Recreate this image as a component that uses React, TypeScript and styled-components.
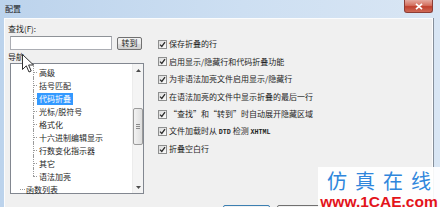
import styled, { createGlobalStyle } from 'styled-components'

const GlobalStyle = createGlobalStyle`
	html, body {
		margin: 0;
		padding: 0;
	}
	body {
		width: 440px;
		height: 207px;
		overflow: hidden;
		font-family: "Noto Sans CJK SC", "Noto Sans", sans-serif;
		font-size: 8px;
		color: #1e1e1e;
	}
`

const Window = styled.div`
	position: relative;
	width: 440px;
	height: 207px;
	overflow: hidden;
	display: flex;
	flex-direction: column;
	background: linear-gradient(90deg, #bcd3ec 0%, #cddff2 55%, #d9e6f4 100%);
`

const TitleBar = styled.div`
	height: 18px;
	flex-shrink: 0;
	display: flex;
	align-items: center;
	padding: 0 7px 0 5px;
`

const Title = styled.span`
	line-height: 10px;
	color: #1b1b1b;
`

const CloseButton = styled.div`
	align-self: flex-start;
	margin-left: auto;
	width: 29px;
	height: 13px;
	box-sizing: border-box;
	border: 1px solid #8c3d35;
	border-top: 0;
	border-radius: 0 0 3px 3px;
	background: linear-gradient(#e5a99f 0%, #d4705f 45%, #c0402e 55%, #cf6a57 100%);
	display: flex;
	align-items: center;
	justify-content: center;
`

const Client = styled.div`
	flex: 1;
	margin: 0 7px 0 4px;
	background: #f0f0f0;
	border-top: 1px solid #fbfcfd;
	border-left: 1px solid #fbfcfd;
	border-right: 1px solid #fdfdfd;
	box-shadow: 1px 0 0 #858f9b;
	display: flex;
	flex-direction: column;
`

const Body = styled.div`
	display: grid;
	grid-template-columns: 136px 1fr;
	column-gap: 14px;
	padding: 5px 0 0 3px;
`

const LeftColumn = styled.div`
	display: flex;
	flex-direction: column;
`

const FieldLabel = styled.label<{ $gap?: number }>`
	height: 10px;
	line-height: 10px;
	margin-top: ${({ $gap }) => $gap ?? 0}px;
`

const SearchRow = styled.div`
	display: flex;
	align-items: center;
	gap: 5px;
	margin: 2px 0 0 2px;
	height: 14px;
`

const SearchInput = styled.div`
	width: 102px;
	height: 14px;
	box-sizing: border-box;
	border: 1px solid #abadb3;
	border-top-color: #8e9297;
	background: #fff;
`

const PushButton = styled.div<{ $width?: number; $focused?: boolean }>`
	width: ${({ $width }) => $width ?? 25}px;
	height: 13px;
	box-sizing: border-box;
	border: 1px solid ${({ $focused }) => ($focused ? '#3c7fb1' : '#707070')};
	border-radius: 2px;
	background: linear-gradient(#f2f2f2 0%, #ebebeb 50%, #dddddd 51%, #cfcfcf 100%);
	display: flex;
	align-items: center;
	justify-content: center;
	line-height: 10px;
	flex-shrink: 0;
`

const Tree = styled.div`
	margin: 1px 0 0 2px;
	width: 134px;
	height: 131px;
	box-sizing: border-box;
	border: 1px solid #828790;
	background: #fff;
	display: flex;
`

const TreeList = styled.ul`
	flex: 1;
	list-style: none;
	margin: 0;
	padding: 2px 0 0;
`

const TreeItem = styled.li<{ $level: number; $last?: boolean }>`
	position: relative;
	height: 13px;
	display: flex;
	align-items: center;
	padding-left: ${({ $level }) => ($level === 2 ? 26 : 13)}px;

	&::before {
		content: '';
		position: absolute;
		left: ${({ $level }) => ($level === 2 ? 22 : 9)}px;
		top: ${({ $level }) => ($level === 2 ? -2 : 6)}px;
		height: ${({ $level, $last }) => ($level === 1 ? 0 : $last ? 8 : 15)}px;
		border-left: 1px dotted #9a9a9a;
	}

	&::after {
		content: '';
		position: absolute;
		left: ${({ $level }) => ($level === 2 ? 22 : 9)}px;
		top: 6px;
		width: ${({ $level }) => ($level === 2 ? 4 : 5)}px;
		border-top: 1px dotted #9a9a9a;
	}
`

const TreeLabel = styled.span<{ $selected?: boolean }>`
	padding: 0 2px;
	height: 12px;
	line-height: 12px;
	background: ${({ $selected }) => ($selected ? '#3399ff' : 'transparent')};
	color: ${({ $selected }) => ($selected ? '#fff' : '#1e1e1e')};
	white-space: nowrap;
`

const ScrollBar = styled.div`
	width: 10px;
	background: #f4f4f4;
	border-left: 1px solid #ececec;
	display: flex;
	flex-direction: column;
`

const ScrollArrow = styled.div`
	height: 12px;
	display: flex;
	align-items: center;
	justify-content: center;
`

const ScrollTrack = styled.div`
	flex: 1;
	display: flex;
	flex-direction: column;
`

const ScrollThumb = styled.div`
	margin: 32px 0 0 0;
	height: 37px;
	box-sizing: border-box;
	border: 1px solid #9b9b9b;
	border-radius: 2px;
	background: linear-gradient(90deg, #f2f2f2, #dedede);
	display: flex;
	flex-direction: column;
	align-items: center;
	justify-content: center;
	gap: 1px;
`

const Grip = styled.span`
	width: 4px;
	height: 1px;
	background: #8a8a8a;
`

const Options = styled.div`
	display: flex;
	flex-direction: column;
	gap: 7.5px;
	padding-top: 15px;
`

const OptionRow = styled.label`
	display: flex;
	align-items: center;
	gap: 2px;
	height: 10px;
	line-height: 10px;
	white-space: nowrap;
`

const CheckBox = styled.span`
	width: 9px;
	height: 9px;
	box-sizing: border-box;
	border: 1px solid #8e8f8f;
	background: linear-gradient(135deg, #dcdcdc, #fbfbfb);
	display: flex;
	align-items: center;
	justify-content: center;
	flex-shrink: 0;
`

const Mono = styled.span`
	font-family: "Liberation Mono", "DejaVu Sans Mono", monospace;
	font-size: 6.7px;
	font-weight: 700;
`

const Footer = styled.div`
	display: flex;
	gap: 7px;
	margin-top: 11px;
	padding-left: 218px;
`

const FooterButton = styled(PushButton)`
	height: 14px;
`

const Pointer = styled.svg`
	position: absolute;
	left: 22px;
	top: 54px;
`

const Watermark = styled.div`
	position: absolute;
	right: 0;
	bottom: 0;
	width: 122px;
	height: 40px;
	background: rgba(255, 255, 255, 0.92);
	display: flex;
	flex-direction: column;
	align-items: center;
	padding-top: 2px;
	box-sizing: border-box;
`

const BrandName = styled.div`
	font-size: 20px;
	line-height: 24px;
	letter-spacing: 8px;
	margin-right: -8px;
	color: #2f86dc;
`

const BrandUrl = styled.div`
	margin-top: 2px;
	font-family: "Liberation Sans", Arial, sans-serif;
	font-weight: 700;
	font-size: 15.5px;
	line-height: 14px;
	color: #e3141b;
`

const treeItems = [
	{ label: '高级', level: 2 },
	{ label: '括号匹配', level: 2 },
	{ label: '代码折叠', level: 2, selected: true },
	{ label: '光标/脱符号', level: 2 },
	{ label: '格式化', level: 2 },
	{ label: '十六进制编辑显示', level: 2 },
	{ label: '行数变化指示器', level: 2 },
	{ label: '其它', level: 2 },
	{ label: '语法加亮', level: 2, last: true },
	{ label: '函数列表', level: 1 },
]

const options = [
	'保存折叠的行',
	'启用显示/隐藏行和代码折叠功能',
	'为非语法加亮文件启用显示/隐藏行',
	'在语法加亮的文件中显示折叠的最后一行',
	'“查找”和“转到”时自动展开隐藏区域',
	<>
		文件加载时从 <Mono>DTD</Mono> 检测 <Mono>XHTML</Mono>
	</>,
	'折叠空白行',
]

const Check = () => (
	<svg width="7" height="7" viewBox="0 0 7 7">
		<path d="M1 3.6 L2.8 5.4 L6 1.2" fill="none" stroke="#2b2b2b" strokeWidth="1.3" />
	</svg>
)

const Arrow = ({ down }: { down?: boolean }) => (
	<svg width="5" height="3" viewBox="0 0 5 3">
		<path d={down ? 'M0 0 H5 L2.5 3 Z' : 'M0 3 H5 L2.5 0 Z'} fill="#4d4d4d" />
	</svg>
)

const App = (): JSX.Element => {
	return (
		<Window>
			<GlobalStyle />
			<TitleBar>
				<Title>配置</Title>
				<CloseButton>
					<svg width="8" height="7" viewBox="0 0 8 7">
						<path d="M1 0.8 L7 6.2 M7 0.8 L1 6.2" stroke="#fff" strokeWidth="1.7" />
					</svg>
				</CloseButton>
			</TitleBar>
			<Client>
				<Body>
					<LeftColumn>
						<FieldLabel>查找(F):</FieldLabel>
						<SearchRow>
							<SearchInput />
							<PushButton>转到</PushButton>
						</SearchRow>
						<FieldLabel $gap={2}>导航</FieldLabel>
						<Tree>
							<TreeList>
								{treeItems.map(({ label, level, selected, last }) => (
									<TreeItem key={label} $level={level} $last={last}>
										<TreeLabel $selected={selected}>{label}</TreeLabel>
									</TreeItem>
								))}
							</TreeList>
							<ScrollBar>
								<ScrollArrow>
									<Arrow />
								</ScrollArrow>
								<ScrollTrack>
									<ScrollThumb>
										<Grip />
										<Grip />
										<Grip />
									</ScrollThumb>
								</ScrollTrack>
								<ScrollArrow>
									<Arrow down />
								</ScrollArrow>
							</ScrollBar>
						</Tree>
					</LeftColumn>
					<Options>
						{options.map((option, index) => (
							<OptionRow key={`option-${index}`}>
								<CheckBox>
									<Check />
								</CheckBox>
								<span>{option}</span>
							</OptionRow>
						))}
					</Options>
				</Body>
				<Footer>
					<FooterButton $width={47} $focused aria-label="确定" />
					<FooterButton $width={47} aria-label="取消" />
					<FooterButton $width={47} aria-label="帮助" />
				</Footer>
			</Client>
			<Pointer width="12" height="19" viewBox="0 0 12 19">
				<path d="M0.5 0.5 V15.5 L4.3 11.8 L7 18 L9.2 17 L6.6 11 H11.5 Z" fill="#fff" stroke="#333" strokeWidth="1" />
			</Pointer>
			<Watermark>
				<BrandName>仿真在线</BrandName>
				<BrandUrl>www.1CAE.com</BrandUrl>
			</Watermark>
		</Window>
	)
}

export default App
